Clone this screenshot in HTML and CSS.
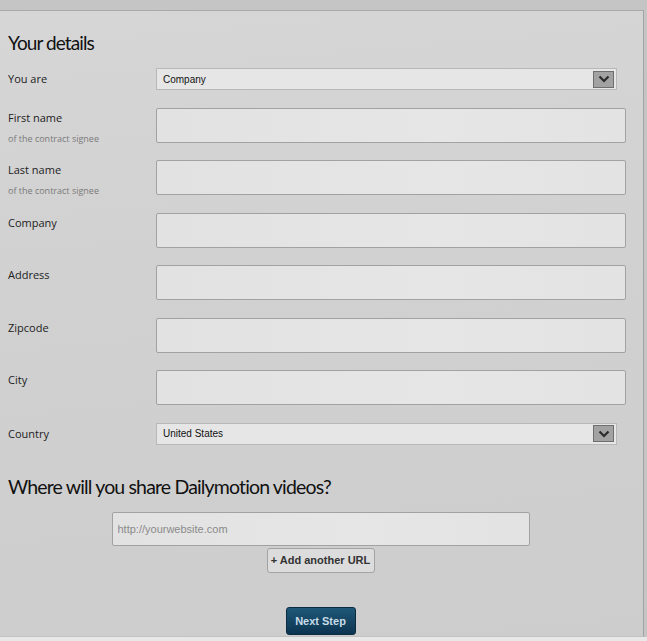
FILE: index.html
```html
<!doctype html>
<html lang="en">
<head>
    <meta charset="UTF-8">
    <title>Your details</title>
    <link rel="stylesheet" href="styles.css">
</head>
<body>
<div id="wrap">
    <div class="panel">
        <h2 class="title">Your details</h2>

        <div class="row row-select">
            <label>You are</label>
            <div class="select">
                <span>Company</span>
                <span class="arrow"><svg width="12" height="8" viewBox="0 0 12 8"><polyline points="1.5,1.5 6,6 10.5,1.5" fill="none" stroke="#2b2b2b" stroke-width="2.2"/></svg></span>
            </div>
        </div>

        <div class="row">
            <label>First name<small>of the contract signee</small></label>
            <input type="text" class="txt">
        </div>
        <div class="row">
            <label>Last name<small>of the contract signee</small></label>
            <input type="text" class="txt">
        </div>
        <div class="row">
            <label>Company</label>
            <input type="text" class="txt">
        </div>
        <div class="row">
            <label>Address</label>
            <input type="text" class="txt">
        </div>
        <div class="row">
            <label>Zipcode</label>
            <input type="text" class="txt">
        </div>
        <div class="row">
            <label>City</label>
            <input type="text" class="txt">
        </div>

        <div class="row row-select">
            <label>Country</label>
            <div class="select">
                <span>United States</span>
                <span class="arrow"><svg width="12" height="8" viewBox="0 0 12 8"><polyline points="1.5,1.5 6,6 10.5,1.5" fill="none" stroke="#2b2b2b" stroke-width="2.2"/></svg></span>
            </div>
        </div>

        <h2 class="title title-share">Where will you share Dailymotion videos?</h2>

        <div class="share">
            <input type="text" class="txt url" placeholder="http://yourwebsite.com">
            <button type="button" class="btn btn-add">+ Add another URL</button>
            <button type="button" class="btn btn-next">Next Step</button>
        </div>
    </div>
    <div class="foot"></div>
</div>
</body>
</html>
```

FILE: styles.css
```css
* {
    margin: 0;
    padding: 0;
    box-sizing: border-box;
}

body {
    background-color: #c5c5c5;
    font-family: "Open Sans", "DejaVu Sans", sans-serif;
    overflow: hidden;
}

#wrap {
    padding-top: 10px;
}

.panel {
    width: 644px;
    height: 627px;
    padding: 21px 0 0 8px;
    border-top: 1px solid #a9a9a9;
    border-right: 1px solid #a3a3a3;
    border-bottom: 1px solid #c2c2c2;
    background: linear-gradient(175deg, #d6d6d6 0%, #d1d1d1 40%, #cdcdcd 100%);
}

.foot {
    height: 6px;
    background-color: #e8e8e8;
}

.title {
    font-family: "Lato", "Inter", sans-serif;
    font-weight: 400;
    font-size: 19px;
    line-height: 22px;
    letter-spacing: -0.9px;
    color: #111;
    margin-bottom: 14px;
}

.row {
    display: grid;
    grid-template-columns: 148px 470px;
    grid-template-rows: 35px;
    margin-bottom: 17.5px;
}

.row label {
    display: block;
    font-size: 11px;
    line-height: 20px;
    color: #222;
}

.row label small {
    display: block;
    margin-top: 4px;
    font-size: 9px;
    line-height: 14px;
    color: #7a7a7a;
}

.row-select {
    grid-template-rows: 22px;
}

.row-select label {
    line-height: 22px;
}

.txt {
    width: 470px;
    height: 35px;
    border: 1px solid #a2a2a2;
    border-radius: 2px;
    background: linear-gradient(90deg, #e2e2e2, #e6e6e6 60%, #e3e3e3);
    outline: none;
}

.select {
    width: 461px;
    height: 22px;
    display: flex;
    align-items: center;
    justify-content: space-between;
    padding: 0 2px 0 6px;
    border: 1px solid #b8b8b8;
    background-color: #e6e6e6;
    font-family: "Liberation Sans", Arial, sans-serif;
    font-size: 10px;
    color: #111;
}

.arrow {
    width: 21px;
    height: 17px;
    display: flex;
    align-items: center;
    justify-content: center;
    border: 1px solid #6e6e6e;
    background-color: #a2a2a2;
}

.title-share {
    margin: 30px 0 13px;
    font-size: 19.5px;
    line-height: 24px;
    letter-spacing: -0.85px;
}

.share {
    display: flex;
    flex-direction: column;
    align-items: center;
    padding-right: 10px;
}

.url {
    width: 418px;
    height: 34px;
    padding-left: 5px;
    font-family: "Liberation Sans", Arial, sans-serif;
    font-size: 11px;
}

.url::placeholder {
    color: #8a8a8a;
}

.btn {
    font-family: "Liberation Sans", Arial, sans-serif;
    font-weight: bold;
    font-size: 11px;
    border-radius: 3px;
    cursor: pointer;
}

.btn-add {
    width: 108px;
    height: 25px;
    margin-top: 2px;
    border: 1px solid #a3a3a3;
    background-color: #dcdcdc;
    color: #333;
}

.btn-next {
    width: 70px;
    height: 28px;
    margin-top: 34px;
    border: 1px solid #0b2b40;
    background: linear-gradient(#1f5878, #0c3450);
    color: #c9dce8;
}
```
